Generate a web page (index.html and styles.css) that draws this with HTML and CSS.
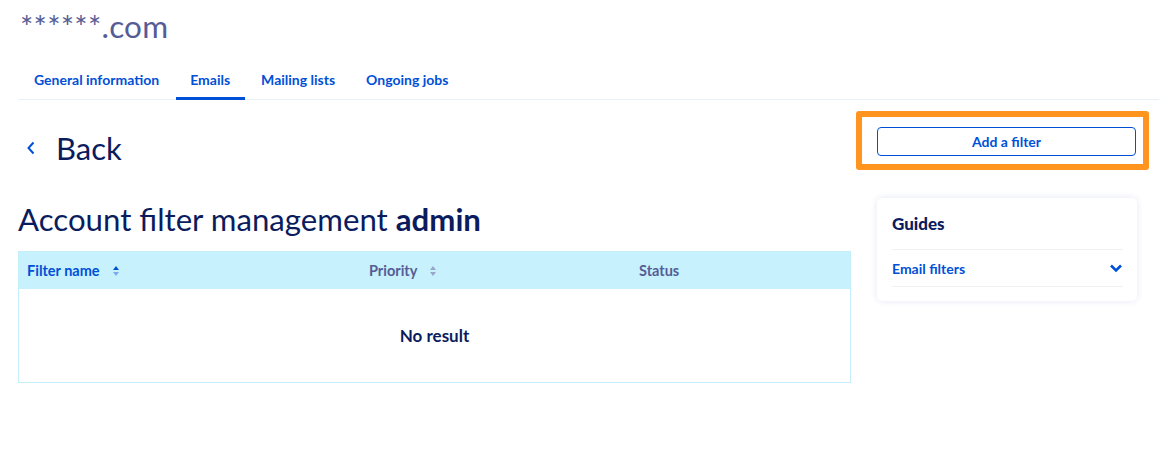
FILE: index.html
```html
<!DOCTYPE html>
<html lang="en">
<head>
<meta charset="utf-8">
<title>Account filter management</title>
<link rel="stylesheet" href="styles.css">
</head>
<body>
<div class="frame">
  <div class="page">
    <h1 class="domain">******.com</h1>
    <nav class="tabs">
      <a class="tab">General information</a>
      <a class="tab active">Emails</a>
      <a class="tab">Mailing lists</a>
      <a class="tab">Ongoing jobs</a>
    </nav>
    <div class="content">
      <main class="main">
        <a class="back">
          <svg class="back-icon" width="10" height="14" viewBox="0 0 10 14"><path d="M7.5 1.5 L2.5 7 L7.5 12.5" fill="none" stroke="#0050d7" stroke-width="2"/></svg>
          <span>Back</span>
        </a>
        <h2 class="title">Account filter management <strong>admin</strong></h2>
        <div class="table">
          <div class="thead">
            <div class="th sorted">Filter name
              <svg class="sort" width="8" height="12" viewBox="0 0 8 12"><path d="M4 1 L7 5 H1 Z" fill="#0050d7"/><path d="M4 11 L7 7 H1 Z" fill="#7fa8ea"/></svg>
            </div>
            <div class="th">Priority
              <svg class="sort" width="8" height="12" viewBox="0 0 8 12"><path d="M4 1 L7 5 H1 Z" fill="#9aa4c8"/><path d="M4 11 L7 7 H1 Z" fill="#9aa4c8"/></svg>
            </div>
            <div class="th">Status</div>
          </div>
          <div class="empty">No result</div>
        </div>
      </main>
      <aside class="side">
        <div class="highlight">
          <button class="btn">Add a filter</button>
        </div>
        <div class="card">
          <h3 class="card-title">Guides</h3>
          <div class="guide">
            <span>Email filters</span>
            <svg width="14" height="10" viewBox="0 0 14 10"><path d="M2 2.5 L7 7.5 L12 2.5" fill="none" stroke="#0050d7" stroke-width="2.6"/></svg>
          </div>
        </div>
      </aside>
    </div>
  </div>
  <div class="scroll"></div>
</div>
</body>
</html>
```
FILE: styles.css
```css
* { box-sizing: border-box; }
html, body { margin: 0; padding: 0; }
body {
  font-family: "Source Sans Pro", Lato, "Noto Sans", sans-serif;
  background: #fff;
  color: #0b1c5e;
}
.frame { display: flex; min-height: 451px; }
.page { flex: 1; padding: 0 0 0 18px; }
.scroll { width: 10px; background: #f6f6f8; }

.domain {
  margin: 0;
  padding: 8px 0 0 2px;
  font-weight: 400;
  font-size: 31.5px;
  line-height: 36px;
  color: #555c96;
  letter-spacing: 0.2px;
}
.tabs {
  display: flex;
  margin-top: 17px;
  border-bottom: 1px solid #e8f0f8;
  margin-right: 16px;
  height: 39px;
}
.tab {
  padding: 0 15px 0 16px;
  font-weight: 700;
  font-size: 14px;
  line-height: 37px;
  color: #0050d7;
  border-bottom: 3px solid transparent;
  height: 39px;
}
.tab.active { border-bottom-color: #0050d7; padding: 0 15px 0 14px; margin-left: 2px; }

.content { display: flex; gap: 26px; }
.main { width: 833px; }
.back {
  display: flex;
  align-items: center;
  gap: 20px;
  margin-top: 30px;
  padding-left: 8px;
  font-size: 31px;
  line-height: 36px;
  color: #0b1c5e;
}
.title {
  margin: 35px 0 0 0;
  font-weight: 400;
  font-size: 31.2px;
  line-height: 36px;
  color: #0b1c5e;
}
.title strong { font-weight: 700; }

.table {
  margin-top: 14px;
  border: 1px solid #c4eef9;
}
.thead {
  display: grid;
  grid-template-columns: 342px 270px 1fr;
  background: #c7f1fd;
  height: 37px;
  align-items: center;
}
.th {
  padding-left: 8px;
  font-weight: 700;
  font-size: 14.5px;
  color: #555c96;
  display: flex;
  align-items: center;
  gap: 12px;
}
.th.sorted { color: #0050d7; }
.empty {
  height: 93px;
  display: flex;
  align-items: center;
  justify-content: center;
  font-weight: 700;
  font-size: 17px;
  color: #0b1c5e;
}

.side { width: 298px; display: flex; flex-direction: column; }
.highlight {
  margin: 11px 0 0 -21px;
  width: 293px;
  border: 6px solid #ff951e;
  border-radius: 3px;
  padding: 10px 6px 8px 15px;
}
.btn {
  display: block;
  width: 259px;
  height: 29px;
  border: 1px solid #0050d7;
  border-radius: 4px;
  background: #fff;
  font-family: inherit;
  font-weight: 700;
  font-size: 14px;
  color: #0050d7;
}
.card {
  margin-top: 28px;
  width: 260px;
  border-radius: 5px;
  box-shadow: 0 0 6px rgba(80, 90, 200, 0.15);
  padding: 14px 14px 14px 15px;
}
.card-title {
  margin: 0;
  font-size: 17px;
  line-height: 24px;
  font-weight: 900;
  color: #0b1c5e;
  padding-bottom: 13px;
  border-bottom: 1px solid #eef0f4;
}
.guide {
  display: flex;
  align-items: center;
  justify-content: space-between;
  height: 37px;
  border-bottom: 1px solid #eef0f4;
  font-weight: 700;
  font-size: 14px;
  color: #0050d7;
}
```
